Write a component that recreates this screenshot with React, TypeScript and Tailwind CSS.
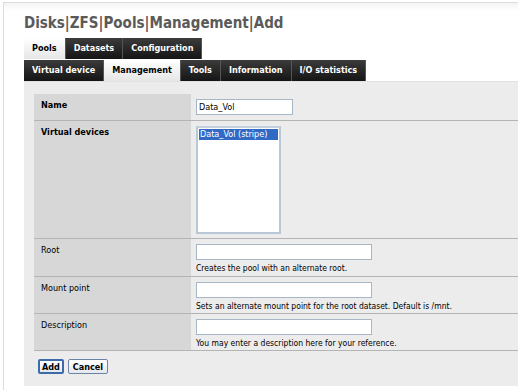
import React from "react";

const font = { fontFamily: "'DejaVu Sans Condensed', 'DejaVu Sans', sans-serif", fontStretch: "condensed" as const };

function Tab({ label, active }: { label: string; active?: boolean }) {
  return (
    <div
      className={
        "flex items-center px-[8px] h-full text-[9px] font-bold border-r border-[#555] " +
        (active
          ? "bg-gradient-to-b from-[#ffffff] to-[#e6e6e6] text-black"
          : "bg-gradient-to-b from-[#3c3c3c] to-[#151515] text-white")
      }
    >
      {label}
    </div>
  );
}

function Row({
  label,
  bold,
  children,
  h,
}: {
  label: string;
  bold?: boolean;
  children: React.ReactNode;
  h: string;
}) {
  return (
    <div className={"flex border-b border-[#b4b4b4] " + h}>
      <div className={"w-[157px] shrink-0 bg-[#d7d7d7] pl-[7px] pt-[5px] text-[9px] text-black " + (bold ? "font-bold" : "")}>
        {label}
      </div>
      <div className="flex-1 pl-[5px] pt-[5px]">{children}</div>
    </div>
  );
}

function TextInput({ w, value }: { w: string; value?: string }) {
  return (
    <div className={"h-[16px] bg-white border border-[#a7b7c7] text-[9px] leading-[14px] pl-[2px] text-black " + w}>
      {value}
    </div>
  );
}

export default function App() {
  return (
    <div className="w-[521px] h-[390px] bg-white overflow-hidden" style={font}>
      <div className="ml-[3px] mt-[2px] w-[515px] h-[388px] border-l border-t border-[#dcdcdc] bg-gradient-to-b from-[#f4f4f4] to-white to-[8px] pl-[20px] flex flex-col">
        <div className="h-[35px] pt-[10px] text-[15px] leading-[20px] font-bold text-[#5a5a5a]">
          Disks|ZFS|Pools|Management|Add
        </div>
        <div className="flex h-[21px]">
          <Tab label="Pools" active />
          <Tab label="Datasets" />
          <Tab label="Configuration" />
        </div>
        <div className="flex h-[22px] border-t border-white">
          <Tab label="Virtual device" />
          <Tab label="Management" active />
          <Tab label="Tools" />
          <Tab label="Information" />
          <Tab label="I/O statistics" />
        </div>
        <div className="w-[494px] h-[305px] bg-[#ececec] border-t border-[#e2e2e2] pt-[12px] pl-[10px]">
          <div className="flex flex-col">
            <Row label="Name" bold h="h-[27px]">
              <TextInput w="w-[97px]" value="Data_Vol" />
            </Row>
            <Row label="Virtual devices" bold h="h-[118px]">
              <div className="w-[85px] h-[108px] bg-white border-2 border-[#b9c7d6] border-t-[#c5d0dc] p-px">
                <div className="bg-[#316ac5] text-white text-[9px] leading-[11px] pl-[1px] whitespace-nowrap overflow-hidden">Data_Vol (stripe)</div>
              </div>
            </Row>
            <Row label="Root" h="h-[38px]">
              <TextInput w="w-[176px]" />
              <div className="text-[8.5px] leading-[10px] mt-[3px] text-black">Creates the pool with an alternate root.</div>
            </Row>
            <Row label="Mount point" h="h-[37px]">
              <TextInput w="w-[176px]" />
              <div className="text-[8.5px] leading-[10px] mt-[3px] text-black">Sets an alternate mount point for the root dataset. Default is /mnt.</div>
            </Row>
            <Row label="Description" h="h-[37px]">
              <TextInput w="w-[176px]" />
              <div className="text-[8.5px] leading-[10px] mt-[3px] text-black">You may enter a description here for your reference.</div>
            </Row>
          </div>
          <div className="flex gap-[4px] mt-[8px] ml-[4px]">
            <button className="h-[15px] px-[2px] rounded-[2px] border-2 border-[#3d6aa8] bg-gradient-to-b from-white to-[#e4e8ee] text-[9px] leading-[10px] font-bold text-black">
              Add
            </button>
            <button className="h-[15px] px-[4px] rounded-[2px] border border-[#6b84a6] bg-gradient-to-b from-white to-[#e4e8ee] text-[9px] leading-[10px] font-bold text-black">
              Cancel
            </button>
          </div>
        </div>
      </div>
    </div>
  );
}
